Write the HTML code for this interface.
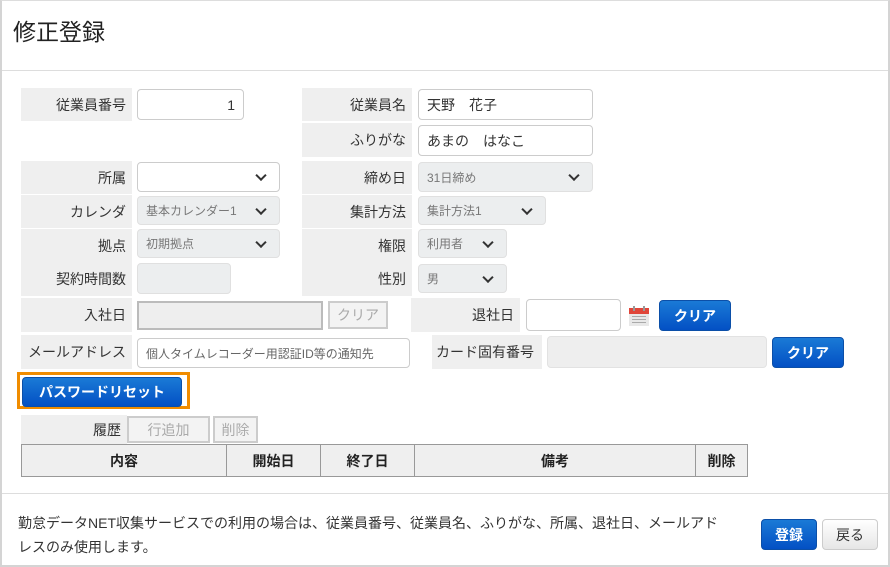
<!DOCTYPE html>
<html><head><meta charset="utf-8"><style>
*{box-sizing:border-box;margin:0;padding:0}
body{width:890px;height:567px;background:#fff;font-family:"Liberation Sans","Noto Sans CJK JP",sans-serif;color:#333;position:relative;overflow:hidden}
.frame{position:absolute;left:0;top:0;width:890px;height:567px;border:2px solid #d4d4d4;border-top:1px solid #ddd}
.a{position:absolute}
.lb{position:absolute;background:#efefef;font-size:14px;text-align:right;padding-right:6px;display:flex;align-items:center;justify-content:flex-end}
.in{position:absolute;background:#fff;border:1px solid #ccc;border-radius:4px;font-size:14px;display:flex;align-items:center;padding:0 8px}
.sel{position:absolute;background:#eceeef;border:1px solid #e0e0e0;border-radius:4px;font-size:12px;color:#777;display:flex;align-items:center;padding:0 8px}
.sel.w{background:#fff;border-color:#ccc}
.chev{position:absolute;right:14px;top:50%;width:8px;height:8px;border-right:2px solid #333;border-bottom:2px solid #333;transform:translateY(-70%) rotate(45deg)}
.bb{position:absolute;background:linear-gradient(#1a7ad6,#0350c4);color:#fff;font-weight:bold;font-size:14px;border-radius:4px;display:flex;align-items:center;justify-content:center;border:1px solid #0b4fa8}
.gb{position:absolute;background:#f3f3f3;border:2px solid #ccc;color:#aaa;font-size:14px;display:flex;align-items:center;justify-content:center}
.th{position:absolute;top:444px;height:33px;background:#efefef;border:1px solid #999;font-size:14px;font-weight:bold;display:flex;align-items:center;justify-content:center;color:#222}
</style></head><body>
<div class="frame"></div>
<div class="a" style="left:13px;top:13px;font-size:23px;color:#222">修正登録</div>
<div class="a" style="left:2px;top:70px;width:886px;height:1px;background:#ddd"></div>

<div class="lb" style="left:21px;top:88px;width:111px;height:33px">従業員番号</div>
<div class="in" style="left:137px;top:89px;width:107px;height:31px;justify-content:flex-end">1</div>
<div class="lb" style="left:302px;top:88px;width:110px;height:33px">従業員名</div>
<div class="in" style="left:418px;top:89px;width:175px;height:31px">天野　花子</div>
<div class="lb" style="left:302px;top:123px;width:110px;height:34px">ふりがな</div>
<div class="in" style="left:418px;top:125px;width:175px;height:31px">あまの　はなこ</div>

<div class="lb" style="left:21px;top:161px;width:111px;height:33px">所属</div>
<div class="sel w" style="left:137px;top:162px;width:143px;height:30px"><span class="chev"></span></div>
<div class="lb" style="left:302px;top:161px;width:110px;height:33px">締め日</div>
<div class="sel" style="left:418px;top:162px;width:175px;height:30px">31日締め<span class="chev"></span></div>

<div class="lb" style="left:21px;top:195px;width:111px;height:33px">カレンダ</div>
<div class="sel" style="left:137px;top:196px;width:143px;height:29px">基本カレンダー1<span class="chev"></span></div>
<div class="lb" style="left:302px;top:195px;width:110px;height:33px">集計方法</div>
<div class="sel" style="left:418px;top:196px;width:128px;height:29px">集計方法1<span class="chev"></span></div>

<div class="lb" style="left:21px;top:229px;width:111px;height:33px">拠点</div>
<div class="sel" style="left:137px;top:229px;width:143px;height:29px">初期拠点<span class="chev"></span></div>
<div class="lb" style="left:302px;top:229px;width:110px;height:33px">権限</div>
<div class="sel" style="left:418px;top:229px;width:89px;height:29px">利用者<span class="chev"></span></div>

<div class="lb" style="left:21px;top:262px;width:111px;height:34px">契約時間数</div>
<div class="sel" style="left:137px;top:263px;width:94px;height:31px"></div>
<div class="lb" style="left:302px;top:262px;width:110px;height:34px">性別</div>
<div class="sel" style="left:418px;top:264px;width:89px;height:29px">男<span class="chev"></span></div>

<div class="lb" style="left:21px;top:298px;width:111px;height:34px">入社日</div>
<div class="a" style="left:137px;top:301px;width:186px;height:29px;background:#eee;border:2px solid #bbb"></div>
<div class="gb" style="left:328px;top:301px;width:60px;height:28px">クリア</div>
<div class="lb" style="left:411px;top:298px;width:109px;height:34px">退社日</div>
<div class="in" style="left:526px;top:299px;width:95px;height:32px"></div>
<svg class="a" style="left:628px;top:305px" width="22" height="22" viewBox="0 0 22 22"><rect x="1" y="3" width="20" height="18" fill="#e8e8e8"/><rect x="1" y="3" width="20" height="6" fill="#e0463a"/><rect x="5" y="1" width="2" height="5" fill="#999"/><rect x="15" y="1" width="2" height="5" fill="#999"/><g fill="#aaa"><rect x="4" y="11" width="14" height="1"/><rect x="4" y="14" width="14" height="1"/><rect x="4" y="17" width="14" height="1"/></g></svg>
<div class="bb" style="left:659px;top:300px;width:72px;height:31px">クリア</div>

<div class="lb" style="left:21px;top:335px;width:111px;height:34px">メールアドレス</div>
<div class="in" style="left:137px;top:338px;width:273px;height:30px;font-size:12px;color:#666">個人タイムレコーダー用認証ID等の通知先</div>
<div class="lb" style="left:432px;top:335px;width:110px;height:34px;justify-content:flex-start;padding-left:4px">カード固有番号</div>
<div class="a" style="left:547px;top:336px;width:220px;height:32px;background:#eee;border:1px solid #e2e2e2;border-radius:4px"></div>
<div class="bb" style="left:772px;top:337px;width:72px;height:31px">クリア</div>

<div class="a" style="left:17px;top:372px;width:173px;height:37px;border:3px solid #f08c00"></div>
<div class="bb" style="left:22px;top:377px;width:160px;height:30px">パスワードリセット</div>

<div class="lb" style="left:21px;top:415px;width:106px;height:29px">履歴</div>
<div class="gb" style="left:127px;top:416px;width:83px;height:27px">行追加</div>
<div class="gb" style="left:213px;top:416px;width:45px;height:27px">削除</div>

<div class="th" style="left:21px;width:206px">内容</div>
<div class="th" style="left:226px;width:95px">開始日</div>
<div class="th" style="left:320px;width:95px">終了日</div>
<div class="th" style="left:414px;width:282px">備考</div>
<div class="th" style="left:695px;width:53px">削除</div>

<div class="a" style="left:2px;top:493px;width:886px;height:1px;background:#ddd"></div>
<div class="a" style="left:18px;top:511px;width:740px;font-size:14px;line-height:24px;color:#333;white-space:nowrap">勤怠データNET収集サービスでの利用の場合は、従業員番号、従業員名、ふりがな、所属、退社日、メールアド<br>レスのみ使用します。</div>
<div class="bb" style="left:761px;top:519px;width:56px;height:31px">登録</div>
<div class="a" style="left:822px;top:519px;width:56px;height:31px;border:1px solid #ccc;border-radius:4px;background:linear-gradient(#fff,#e6e6e6);font-size:14px;display:flex;align-items:center;justify-content:center">戻る</div>
</body></html>
